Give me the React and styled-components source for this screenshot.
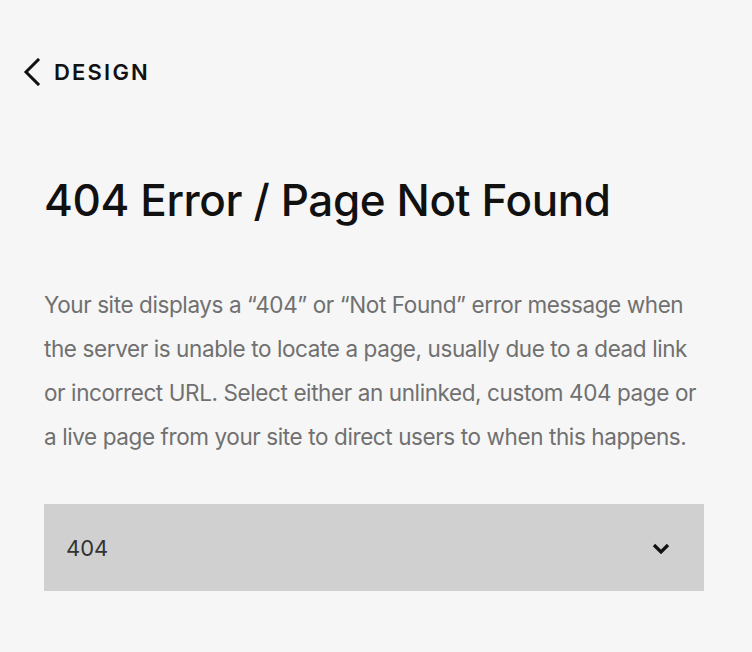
import styled, { createGlobalStyle } from "styled-components";

const GlobalStyle = createGlobalStyle`
  html, body {
    margin: 0;
    padding: 0;
    background: #f6f6f6;
  }
  body {
    font-family: Inter, "Noto Sans", sans-serif;
    -webkit-font-smoothing: antialiased;
  }
`;

function App() {
  return (
    <>
      <GlobalStyle />
      <Page>
        <BackLink>
          <svg width="20" height="28" viewBox="0 0 20 28" fill="none">
            <path d="M17 2L5 14L17 26" stroke="#111" strokeWidth="3" strokeLinecap="square" />
          </svg>
          <span>DESIGN</span>
        </BackLink>

        <Content>
          <Title>404 Error / Page Not Found</Title>
          <Description>
            Your site displays a “404” or “Not Found” error message when
            <br />
            the server is unable to locate a page, usually due to a dead link
            <br />
            or incorrect URL. Select either an unlinked, custom 404 page or
            <br />
            a live page from your site to direct users to when this happens.
          </Description>

          <Select>
            <span>404</span>
            <svg width="18" height="12" viewBox="0 0 18 12" fill="none">
              <path d="M2 3L9 10L16 3" stroke="#111" strokeWidth="3.2" />
            </svg>
          </Select>
        </Content>
      </Page>
    </>
  );
}

const Page = styled.div`
  width: 752px;
  height: 652px;
  box-sizing: border-box;
  padding-top: 56px;
  background: #f6f6f6;
`;

const BackLink = styled.div`
  display: flex;
  align-items: center;
  gap: 13px;
  padding-left: 21px;
  height: 32px;
  color: #111;

  span {
    font-size: 22px;
    font-weight: 600;
    letter-spacing: 2.2px;
  }
`;

const Content = styled.div`
  padding: 0 48px 0 44px;
`;

const Title = styled.h1`
  margin: 84px 0 0;
  font-size: 44px;
  font-weight: 500;
  letter-spacing: -0.4px;
  line-height: 56px;
  color: #111;
  white-space: nowrap;
`;

const Description = styled.p`
  margin: 55px 0 0;
  font-size: 22.5px;
  line-height: 44px;
  color: #707070;
  letter-spacing: -0.4px;
  white-space: nowrap;
`;

const Select = styled.div`
  margin-top: 45px;
  width: 660px;
  height: 87px;
  box-sizing: border-box;
  background: #d0d0d0;
  display: flex;
  align-items: center;
  justify-content: space-between;
  padding: 0 34px 0 22px;

  span {
    font-size: 22px;
    color: #333;
  }
`;

export default App;
